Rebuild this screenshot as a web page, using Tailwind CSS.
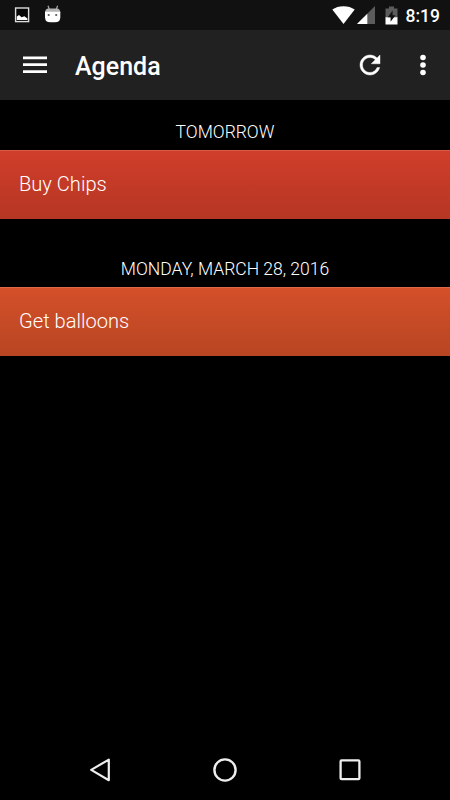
<!DOCTYPE html>
<html lang="en">
  <head>
    <script src="https://cdn.jsdelivr.net/npm/@tailwindcss/browser@4"></script>
    <meta charset="UTF-8" />
    <meta name="viewport" content="width=device-width, initial-scale=1" />
    <title>Agenda</title>
  </head>
  <body class="bg-black text-white font-['Roboto',sans-serif]">
    <div class="flex flex-col h-screen overflow-hidden">
      <!-- status bar -->
      <div class="flex items-center h-[30px] shrink-0 bg-[#111111] pl-[14px] pr-[10px]">
        <svg class="w-4 h-4" viewBox="0 0 16 16">
          <rect x="1.6" y="1" width="13" height="13.6" fill="#050505" stroke="#dcdcdc" stroke-width="1.4" />
          <path d="M2.8 13V9.6L5 8L7.6 10.2L10.4 9.2L13.4 11.5V13Z" fill="#fff" />
        </svg>
        <svg class="w-[17px] h-5 ml-[14px]" viewBox="0 0 17 20">
          <path d="M4 .8L5.4 4.5M13.6 .8L12.2 4.5" stroke="#aaa" stroke-width="1.2" />
          <path d="M1 8Q1 3.4 4.5 3.4H13Q16.3 3.4 16.3 8Z" fill="#b4b4b4" />
          <path d="M1 6.8H16.3V12.4Q16 17.2 11 17.3H6.3Q1.3 17.2 1 12.4Z" fill="#fff" />
          <circle cx="4.7" cy="10" r="1.1" fill="#555" />
          <circle cx="12.2" cy="10" r="1.1" fill="#555" />
        </svg>
        <div class="flex items-center ml-auto">
          <svg class="w-[23px] h-[18px]" viewBox="0 0 23 18">
            <path d="M11.5 18L.3 3.6Q5 .2 11.5 .2T22.7 3.6Z" fill="#fff" />
          </svg>
          <svg class="w-[18px] h-[18px] ml-[2px]" viewBox="0 0 18 18">
            <path d="M0 18L18 0V18Z" fill="#5c5c5c" />
            <path d="M0 18L10.3 7.7V18Z" fill="#fff" />
          </svg>
          <svg class="w-[13px] h-[19px] ml-[10px]" viewBox="0 0 13 19">
            <path d="M4 .5H9V2.5H12.5V12H.5V2.5H4Z" fill="#5c5c5c" />
            <path d="M.5 11.3H12.5V18.5H.5Z" fill="#fff" />
            <path d="M7.6 4.6L2.8 11.2H5.6V15.8L10.5 9.2H7.6Z" fill="#111" />
          </svg>
          <span class="ml-2 text-[17.5px] leading-[30px] font-medium pt-[2px]">8:19</span>
        </div>
      </div>

      <!-- toolbar -->
      <div class="flex items-center h-[70px] shrink-0 bg-[#212121] pl-5 pr-[12.5px]">
        <svg class="w-[30px] h-[30px]" viewBox="0 0 30 30" fill="#fff">
          <path d="M3 6.4h24v2.8H3zM3 13.3h24v2.8H3zM3 20.2h24v2.8H3z" />
        </svg>
        <h1 class="ml-[25px] text-[25px] leading-[30px] font-medium pt-1">Agenda</h1>
        <svg class="w-[30px] h-[30px] ml-auto" viewBox="0 0 24 24" fill="#fff" stroke="#fff" stroke-width=".35">
          <path d="M17.65 6.35C16.2 4.9 14.21 4 12 4c-4.42 0-7.99 3.58-7.99 8s3.57 8 7.99 8c3.73 0 6.84-2.55 7.73-6h-2.08c-.82 2.33-3.04 4-5.65 4-3.31 0-6-2.69-6-6s2.69-6 6-6c1.66 0 3.14.69 4.22 1.78L13 11h7V4l-2.35 2.35z" />
        </svg>
        <svg class="w-[30px] h-[30px] ml-[22.5px]" viewBox="0 0 30 30" fill="#fff">
          <circle cx="15" cy="7.5" r="2.8" />
          <circle cx="15" cy="15" r="2.8" />
          <circle cx="15" cy="22.5" r="2.8" />
        </svg>
      </div>

      <!-- agenda list -->
      <div class="flex-1">
        <h2 class="h-[50px] pt-5 text-center text-[17.5px] leading-6 font-light">TOMORROW</h2>
        <div class="h-[69px] pl-[19px] pb-[2px] flex items-center bg-linear-to-b from-[#d03e2a] to-[#b63624] border-t border-[#da5a48] text-[20.1px] font-light">Buy Chips</div>
        <h2 class="h-[68px] pt-[38px] text-center text-[17.5px] leading-6 font-light">MONDAY, MARCH 28, 2016</h2>
        <div class="h-[69px] pl-[19px] pb-[2px] flex items-center bg-linear-to-b from-[#d3502a] to-[#b94522] border-t border-[#dc6a48] text-[20.1px] font-light">Get balloons</div>
      </div>

      <!-- navigation bar -->
      <div class="flex items-center justify-between h-[60px] shrink-0 px-[87px]">
        <svg class="w-[26px] h-[26px]" viewBox="0 0 26 26" fill="none" stroke="#eee" stroke-width="2.2" stroke-linejoin="round">
          <path d="M21.8 2.6V23.2L4.2 12.9Z" />
        </svg>
        <svg class="w-[26px] h-[26px]" viewBox="0 0 26 26" fill="none" stroke="#eee" stroke-width="2.4">
          <circle cx="13" cy="13" r="10.6" />
        </svg>
        <svg class="w-[26px] h-[26px]" viewBox="0 0 26 26" fill="none" stroke="#eee" stroke-width="2.3">
          <rect x="3.6" y="3.4" width="18.8" height="18.8" rx="1" />
        </svg>
      </div>
    </div>
  </body>
</html>
